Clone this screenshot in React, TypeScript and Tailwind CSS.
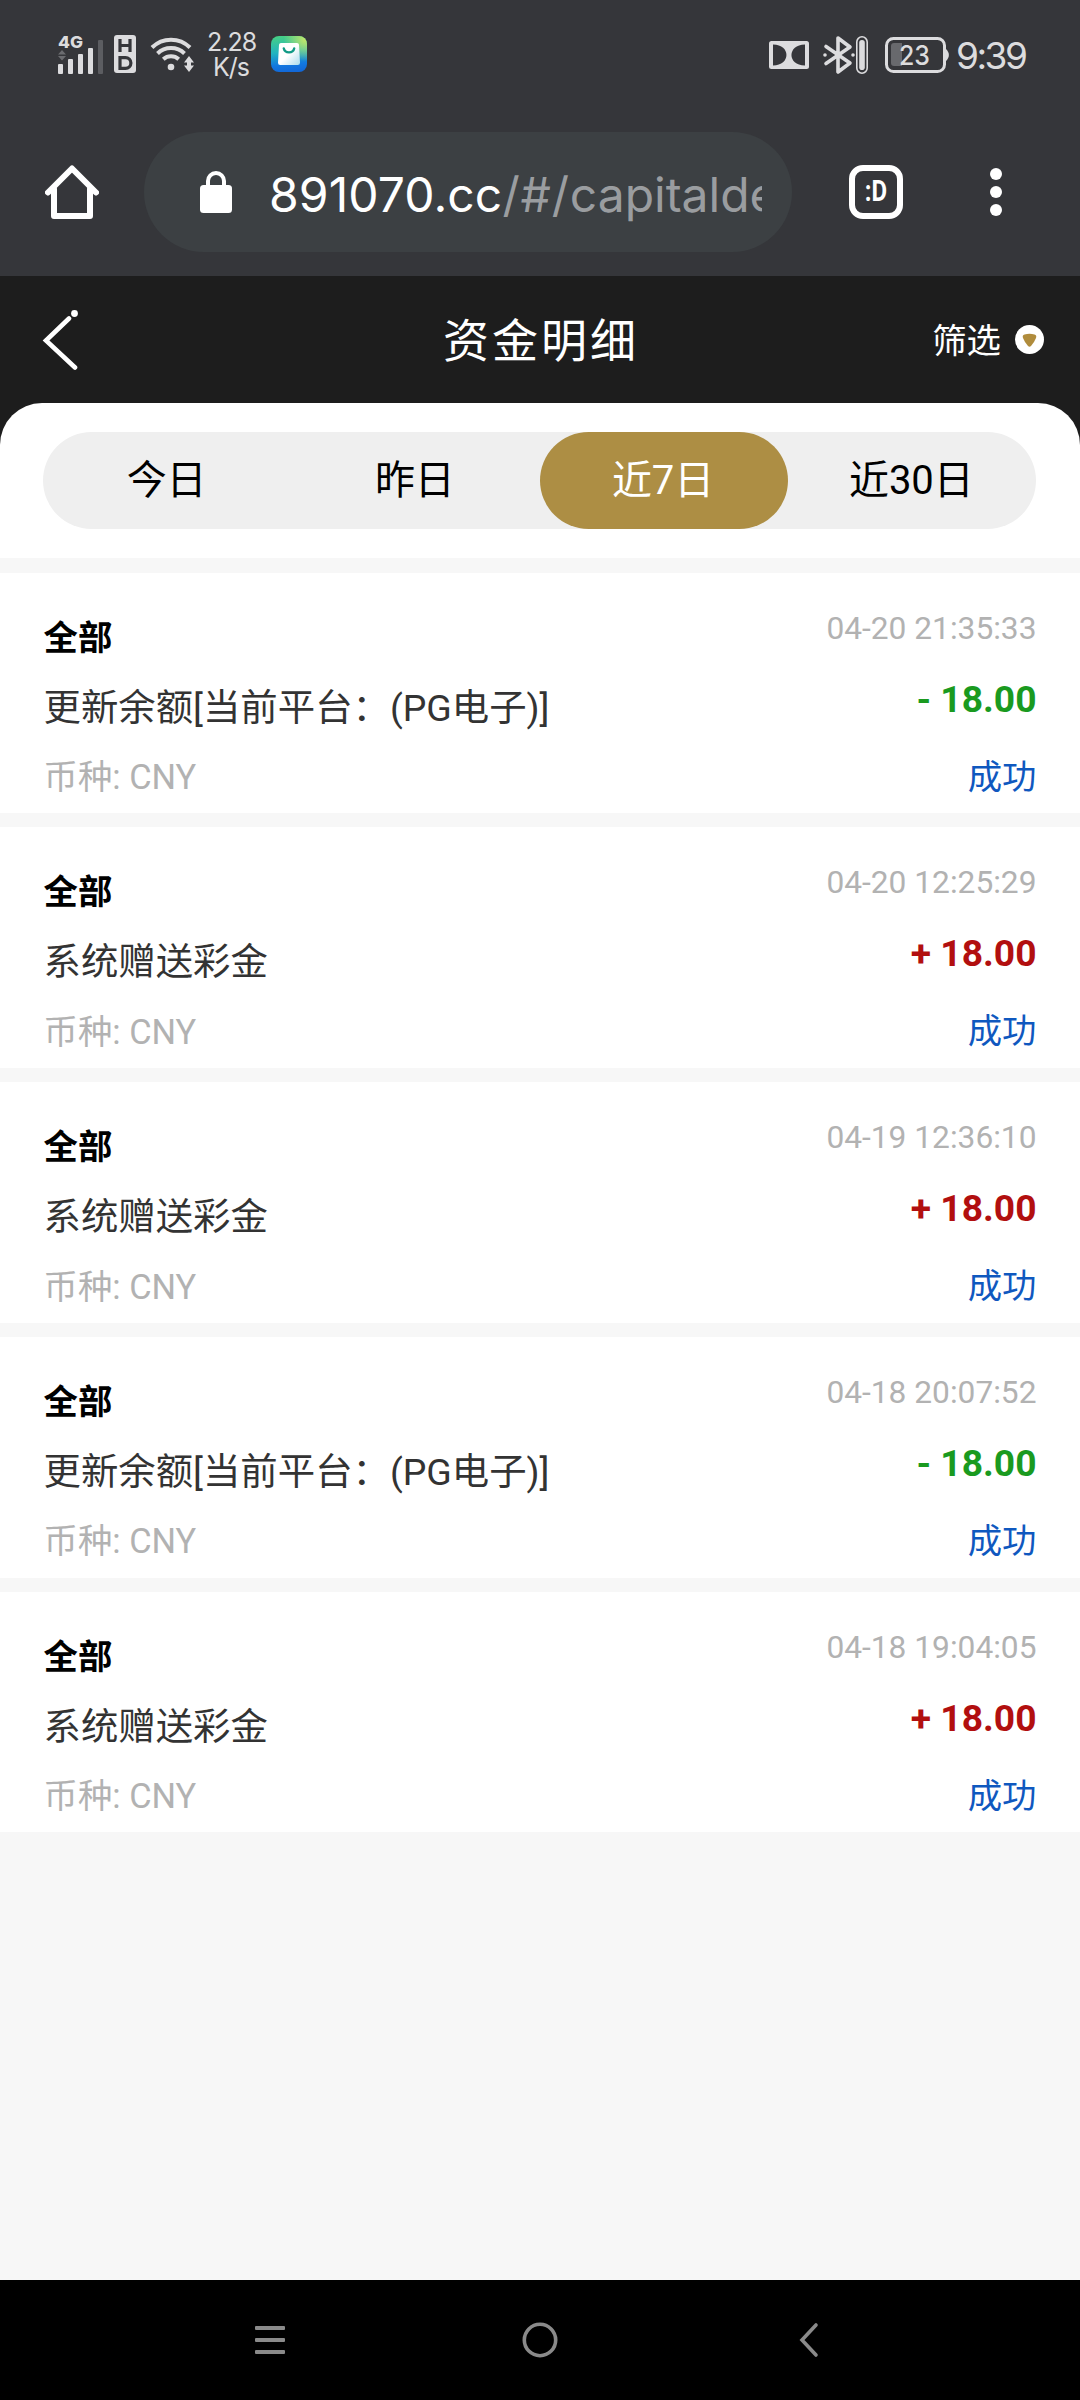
import clsx from "clsx";

type RecordItem = {
  title: string;
  time: string;
  amount: number;
  desc: string;
  currency: string;
  status: string;
};

const UPDATE = "更新余额[当前平台：(PG电子)]";
const BONUS = "系统赠送彩金";

const records: RecordItem[] = [
  { title: "全部", time: "04-20 21:35:33", amount: -18, desc: UPDATE, currency: "CNY", status: "成功" },
  { title: "全部", time: "04-20 12:25:29", amount: 18, desc: BONUS, currency: "CNY", status: "成功" },
  { title: "全部", time: "04-19 12:36:10", amount: 18, desc: BONUS, currency: "CNY", status: "成功" },
  { title: "全部", time: "04-18 20:07:52", amount: -18, desc: UPDATE, currency: "CNY", status: "成功" },
  { title: "全部", time: "04-18 19:04:05", amount: 18, desc: BONUS, currency: "CNY", status: "成功" },
];

const ranges = ["今日", "昨日", "近7日", "近30日"];

function SignalIcon() {
  return (
    <svg className="overflow-visible" width="46" height="40" viewBox="0 0 46 40" fill="#dcdcde">
      <text x="1" y="14" fontSize="16" fontWeight="800" fontFamily="Inter, sans-serif" textLength="25" lengthAdjust="spacingAndGlyphs">
        4G
      </text>
      <path d="M1 20.5l4-4.500 4 4.500zM1 22l4 4.500 4-4.500z" fill="#6b6c70" />
      <rect x="1" y="30" width="5" height="10" rx="1" />
      <rect x="11" y="25" width="5" height="15" rx="1" />
      <rect x="21" y="20" width="5" height="20" rx="1" />
      <rect x="31" y="14" width="5" height="26" rx="1" />
      <rect x="41" y="6" width="5" height="34" rx="1" fill="#5c5d61" />
    </svg>
  );
}

function HdIcon() {
  return (
    <svg width="22" height="38" viewBox="0 0 22 38">
      <rect width="22" height="38" rx="3" fill="#dcdcde" />
      <g fill="none" stroke="#35363a" strokeWidth="3.2">
        <path d="M6 4v13M16 4v13M6 10.5h10" />
        <path d="M6 22.6h5.5a4.9 4.9 0 0 1 0 10.8H6z" />
      </g>
    </svg>
  );
}

function WifiIcon() {
  return (
    <svg width="44" height="36" viewBox="0 0 44 36">
      <g fill="none" stroke="#dcdcde" strokeWidth="4">
        <path d="M2 10.5a27 27 0 0 1 38 0" />
        <path d="M7.5 16.5a19.5 19.5 0 0 1 27 0" />
        <path d="M13.3 22.3a11.5 11.5 0 0 1 15.4 0" />
      </g>
      <circle cx="21" cy="30" r="3.3" fill="#dcdcde" />
      <path d="M39 19l5 6.500h-3v3h3l-5 6.500-5-6.500h3v-3h-3z" fill="#dcdcde" />
    </svg>
  );
}

function StoreIcon() {
  return (
    <svg width="36" height="36" viewBox="0 0 36 36">
      <defs>
        <linearGradient id="store" x1="0.35" y1="0" x2="0.45" y2="1">
          <stop offset="0" stopColor="#46cf85" />
          <stop offset="0.45" stopColor="#22b4c0" />
          <stop offset="0.8" stopColor="#1278e0" />
          <stop offset="1" stopColor="#1268d8" />
        </linearGradient>
        <radialGradient id="glow" cx="0.95" cy="0.1" r="0.6">
          <stop offset="0" stopColor="#c3e66a" />
          <stop offset="1" stopColor="#c3e66a" stopOpacity="0" />
        </radialGradient>
        <linearGradient id="bag" x1="0" y1="0" x2="1" y2="1">
          <stop offset="0.5" stopColor="#ffffff" />
          <stop offset="1" stopColor="#a9dcec" />
        </linearGradient>
      </defs>
      <rect width="36" height="36" rx="8" fill="url(#store)" />
      <rect width="36" height="36" rx="8" fill="url(#glow)" />
      <path d="M10 7h16a2 2 0 0 1 2 1.800l1 18a2.200 2.200 0 0 1-2.200 2.200H9.200A2.200 2.200 0 0 1 7 26.800l1-18A2 2 0 0 1 10 7z" fill="url(#bag)" />
      <path d="M12.800 12.500c1.200 5.200 9.200 5.200 10.400 0" fill="none" stroke="#119a86" strokeWidth="2.400" strokeLinecap="round" />
    </svg>
  );
}

function DolbyIcon() {
  return (
    <svg width="40" height="28" viewBox="0 0 40 28">
      <rect width="40" height="28" rx="2.500" fill="#dcdcde" />
      <path d="M4 3.500c18 0 18 21 0 21zM36 3.500c-18 0-18 21 0 21z" fill="#35363a" />
    </svg>
  );
}

function BluetoothIcon() {
  return (
    <svg width="45" height="40" viewBox="0 0 45 40">
      <path d="M3 11.500L27 28 15 37V3l12 9L3 28.500" fill="none" stroke="#dcdcde" strokeWidth="3.600" strokeLinejoin="round" strokeLinecap="round" />
      <circle cx="2" cy="20" r="1.800" fill="#dcdcde" />
      <circle cx="30" cy="20" r="1.800" fill="#dcdcde" />
      <rect x="33.800" y="1.800" width="10.400" height="36.400" rx="5.200" fill="none" stroke="#dcdcde" strokeWidth="1.600" />
      <rect x="36.200" y="5" width="5.600" height="30" rx="2.800" fill="#dcdcde" />
    </svg>
  );
}

function BatteryIcon() {
  return (
    <svg width="64" height="36" viewBox="0 0 64 36">
      <rect x="1.500" y="1.500" width="58" height="33" rx="7" fill="none" stroke="#dcdcde" strokeWidth="3" />
      <path d="M60.500 11.500c4.500 4 4.500 9 0 13z" fill="#dcdcde" />
      <path d="M9 6h8v23H9a3 3 0 0 1-3-3V9a3 3 0 0 1 3-3z" fill="#68696d" />
      <text x="14" y="28" fontSize="27" fontWeight="500" fontFamily="Inter, sans-serif" fill="#dcdcde" textLength="31" lengthAdjust="spacingAndGlyphs">
        23
      </text>
    </svg>
  );
}

function StatusBar() {
  return (
    <div className="flex h-[108px] items-center justify-between pl-[57px] pr-[53px] text-[#dcdcde]">
      <div className="flex items-center">
        <SignalIcon />
        <div className="ml-[11px]">
          <HdIcon />
        </div>
        <div className="ml-[14px] pt-[2px]">
          <WifiIcon />
        </div>
        <div className="ml-[13px] w-[48px] pt-[2px] text-center font-[Inter,sans-serif] text-[25px] leading-[25px] tracking-[-1px]">
          <div>2.28</div>
          <div>K/s</div>
        </div>
        <div className="ml-[16px]">
          <StoreIcon />
        </div>
      </div>
      <div className="flex items-center pt-px">
        <DolbyIcon />
        <div className="ml-[14px]">
          <BluetoothIcon />
        </div>
        <div className="ml-[17px]">
          <BatteryIcon />
        </div>
        <div className="ml-[7px] w-[71px] pt-px font-[Inter,sans-serif] text-[37px] leading-none tracking-[-2.500px]">9:39</div>
      </div>
    </div>
  );
}

function BrowserBar() {
  return (
    <div className="flex h-[168px] items-center">
      <svg className="ml-[45px]" width="54" height="54" viewBox="0 0 54 54" fill="none" stroke="#fff" strokeWidth="6" strokeLinecap="round" strokeLinejoin="round">
        <path d="M3 27.500L27 3.500l24 24" />
        <path d="M9 24v27h36V24" />
      </svg>
      <div className="ml-[45px] flex h-[120px] w-[648px] items-center rounded-full bg-[#3c4043] pl-[56px] pr-[30px]">
        <svg className="shrink-0" width="32" height="42" viewBox="0 0 32 42">
          <path d="M8 16V10a8 8 0 0 1 16 0v6" fill="none" stroke="#fff" strokeWidth="4" />
          <rect y="14" width="32" height="28" rx="3.500" fill="#fff" />
        </svg>
        <div className="ml-[37px] mt-[6px] flex-1 overflow-hidden whitespace-nowrap font-[Inter,sans-serif] text-[48px] leading-[64px] text-white">
          <span className="tracking-[0.100px]">891070.cc</span>
          <span className="text-[#9a9da0]">
            <span className="tracking-[0.800px]">/#/</span>capitaldetail
          </span>
        </div>
      </div>
      <div className="ml-[57px] flex size-[54px] items-center justify-center rounded-[14px] border-6 border-white pb-[2px] font-[Roboto,sans-serif] text-[30px] font-bold leading-none text-white">
        <span className="scale-x-[0.8]">:D</span>
      </div>
      <div className="ml-[87px] flex flex-col gap-[6px]">
        <i className="size-3 rounded-full bg-white" />
        <i className="size-3 rounded-full bg-white" />
        <i className="size-3 rounded-full bg-white" />
      </div>
    </div>
  );
}

function PageHeader() {
  return (
    <header className="flex h-[127px] items-center justify-between pl-[42px] pr-[36px] text-white">
      <svg className="mr-[72px]" width="36" height="62" viewBox="0 0 36 62">
        <path d="M27 9.500L4 31.500l29 27" fill="none" stroke="#fff" strokeWidth="4.600" strokeLinecap="round" />
        <circle cx="32.500" cy="4.500" r="3.400" fill="#fff" />
      </svg>
      <h1 className="pt-[3px] text-[46px] leading-none tracking-[3px]">资金明细</h1>
      <div className="flex items-center">
        <span className="pt-[4px] text-[34.400px] leading-none">筛选</span>
        <svg className="ml-[14px]" width="29" height="29" viewBox="0 0 29 29">
          <circle cx="14.500" cy="14.500" r="14.500" fill="#fff" />
          <path d="M9.500 9.500q5-1.500 10 0 2.500.5 1.500 3.500-1.500 4-5 8-1.500 1.500-3 0-3.500-4-5-8-1-3 1.500-3.500z" fill="#b08c3c" />
        </svg>
      </div>
    </header>
  );
}

function RangeTabs({ active }: { active: number }) {
  return (
    <div className="rounded-t-[42px] bg-white pb-[29px] pl-[43px] pr-[44px] pt-[29px]">
      <div className="grid h-[97px] grid-cols-4 rounded-full bg-[#efefef]">
        {ranges.map((label, i) => (
          <button
            key={label}
            className={clsx(
              "rounded-full pr-px text-[40px] leading-none",
              i === active ? "bg-[#ad8e44] text-white" : "text-black"
            )}
          >
            {label}
          </button>
        ))}
      </div>
    </div>
  );
}

function RecordRow({ item }: { item: RecordItem }) {
  const income = item.amount > 0;
  return (
    <li className="flex h-[240.700px] justify-between bg-white pl-[43.500px] pr-[43.500px]">
      <div className="pt-[30px]">
        <div className="h-[70px] text-[34.400px] font-bold leading-[70px] text-black">{item.title}</div>
        <div className="h-[69.500px] text-[37.400px] leading-[70px] text-[#333]">{item.desc}</div>
        <div className="h-[70px] text-[34.400px] leading-[70px] text-[#b2b2b2]">币种: {item.currency}</div>
      </div>
      <div className="pt-[21px] text-right">
        <div className="h-[70px] text-[31.700px] leading-[70px] text-[#b2b2b2]">{item.time}</div>
        <div
          className={clsx(
            "h-[70px] text-[37.200px] font-bold leading-[70px]",
            income ? "text-[#b20f0f]" : "text-[#1a9a1f]"
          )}
        >
          {income ? "+" : "-"} {Math.abs(item.amount).toFixed(2)}
        </div>
        <div className="mt-[8px] h-[70px] text-[34.400px] leading-[70px] text-[#0f58bf]">{item.status}</div>
      </div>
    </li>
  );
}

function NavBar() {
  return (
    <nav className="flex h-[120px] items-center bg-black text-[#8a8a8a]">
      <svg className="ml-[255px]" width="30" height="36" viewBox="0 0 30 36" fill="currentColor">
        <rect y="4" width="30" height="4" rx="1" />
        <rect y="16" width="30" height="4" rx="1" />
        <rect y="28" width="30" height="4" rx="1" />
      </svg>
      <svg className="ml-[237px]" width="36" height="36" viewBox="0 0 36 36" fill="none" stroke="currentColor" strokeWidth="3.600">
        <circle cx="18" cy="18" r="15.700" />
      </svg>
      <svg className="ml-[241px]" width="20" height="36" viewBox="0 0 20 36" fill="none" stroke="currentColor" strokeWidth="3.600" strokeLinecap="round">
        <path d="M17 3L3 18l14 15" />
      </svg>
    </nav>
  );
}

export default function App() {
  return (
    <div className="flex h-[2400px] w-[1080px] flex-col overflow-hidden bg-[#f7f7f7] font-[Roboto,'Noto_Sans_CJK_SC',sans-serif]">
      <div className="bg-[#35363a]">
        <StatusBar />
        <BrowserBar />
      </div>
      <div className="bg-[#1d1d1d]">
        <PageHeader />
        <RangeTabs active={2} />
      </div>
      <ul className="mt-[14.800px] flex flex-1 flex-col gap-[14px]">
        {records.map((item) => (
          <RecordRow key={item.time} item={item} />
        ))}
      </ul>
      <NavBar />
    </div>
  );
}
